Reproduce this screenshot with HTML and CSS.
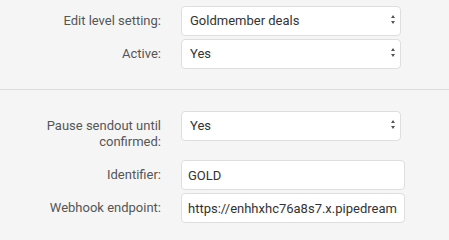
FILE: index.html
```html
<!DOCTYPE html>
<html>
<head>
<meta charset="utf-8">
<link rel="stylesheet" href="styles.css">
</head>
<body>
<div class="form">
  <div class="row">
    <label class="lbl">Edit level setting:</label>
    <div class="select-wrap"><select class="ctl select"><option>Goldmember deals</option></select></div>
  </div>
  <div class="row">
    <label class="lbl">Active:</label>
    <div class="select-wrap"><select class="ctl select"><option>Yes</option></select></div>
  </div>
  <hr class="divider">
  <div class="row">
    <label class="lbl">Pause sendout until confirmed:</label>
    <div class="select-wrap"><select class="ctl select"><option>Yes</option></select></div>
  </div>
  <div class="row">
    <label class="lbl">Identifier:</label>
    <input class="ctl input" type="text" value="GOLD">
  </div>
  <div class="row">
    <label class="lbl">Webhook endpoint:</label>
    <input class="ctl input" type="text" value="https://enhhxhc76a8s7.x.pipedream.net">
  </div>
</div>
</body>
</html>
```
FILE: styles.css
```css
html, body {
  margin: 0;
  padding: 0;
  background: #f5f5f5;
}
body {
  font-family: Roboto, "Liberation Sans", sans-serif;
  font-size: 13px;
  line-height: 16px;
}
.form {
  padding-top: 6px;
}
.row {
  display: grid;
  grid-template-columns: 161px auto;
  column-gap: 20px;
  align-items: start;
  margin-bottom: 3px;
}
.lbl {
  text-align: right;
  color: #555;
  padding: 7px 0;
}
.select-wrap {
  position: relative;
  width: 220px;
  height: 30px;
}
.select-wrap::before,
.select-wrap::after {
  content: "";
  position: absolute;
  right: 6px;
  width: 0;
  height: 0;
  border-left: 2.5px solid transparent;
  border-right: 2.5px solid transparent;
  pointer-events: none;
}
.select-wrap::before {
  top: 9px;
  border-bottom: 3.5px solid #555;
}
.select-wrap::after {
  top: 14.5px;
  border-top: 3.5px solid #555;
}
.ctl {
  box-sizing: border-box;
  height: 30px;
  margin: 0;
  border: 1px solid #dedede;
  border-radius: 4px;
  background: #fff;
  color: #333;
  font-family: Roboto, "Liberation Sans", sans-serif;
  font-size: 13px;
  line-height: 16px;
  outline: none;
}
.select {
  -webkit-appearance: none;
  appearance: none;
  width: 220px;
  padding: 0 20px 0 8px;
}
.input {
  width: 224px;
  padding: 0 7px 0 6px;
}
.divider {
  border: 0;
  border-top: 1px solid #dddddd;
  height: 0;
  margin: 20px 0 21px;
}
```
